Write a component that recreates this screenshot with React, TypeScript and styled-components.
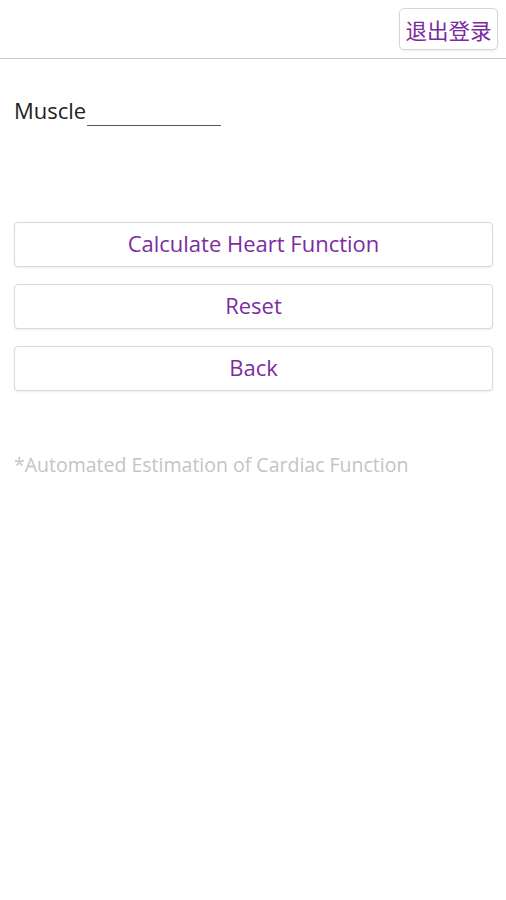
import React from "react";
import styled, { createGlobalStyle } from "styled-components";

const Global = createGlobalStyle`
  html, body { margin: 0; padding: 0; background: #fff; }
  body { font-family: "Open Sans", "Noto Sans CJK SC", sans-serif; }
`;

const Header = styled.header`
  height: 59px;
  border-bottom: 1px solid #c8c8c8;
  display: flex;
  justify-content: flex-end;
  align-items: flex-start;
  padding: 8px 8px 0 0;
  box-sizing: border-box;
`;

const LogoutButton = styled.button`
  width: 99px;
  height: 42px;
  border: 1px solid #d6d6d6;
  border-radius: 5px;
  background: #fff;
  color: #7b2a9e;
  font-family: "Noto Sans CJK SC", sans-serif;
  font-size: 21.5px;
  padding: 0;
  box-shadow: 0 1px 2px rgba(0,0,0,0.08);
`;

const Main = styled.main`
  padding: 34px 13px 0 14px;
  display: flex;
  flex-direction: column;
`;

const FieldRow = styled.div`
  display: flex;
  align-items: flex-end;
  height: 30px;
`;

const Label = styled.span`
  font-size: 22px;
  color: #222;
  line-height: 26px;
`;

const LineInput = styled.input`
  width: 134px;
  border: none;
  border-bottom: 1px solid #555;
  height: 24px;
  padding: 0;
  margin-left: 1px;
  margin-bottom: -3px;
  outline: none;
  background: transparent;
`;

const Buttons = styled.div`
  display: flex;
  flex-direction: column;
  gap: 17px;
  margin-top: 99px;
`;

const ActionButton = styled.button`
  height: 45px;
  width: 100%;
  border: 1px solid #d9d9d9;
  border-radius: 4px;
  background: #fff;
  color: #7d2ca0;
  font-family: "Open Sans", sans-serif;
  font-size: 22px;
  padding: 0 0 3px 0;
  box-shadow: 0 1px 2px rgba(0,0,0,0.08);
`;

const Note = styled.p`
  margin: 60px 0 0 0;
  color: #c4c4c4;
  font-size: 19.5px;
`;

export default function App() {
  return (
    <>
      <Global />
      <Header>
        <LogoutButton>退出登录</LogoutButton>
      </Header>
      <Main>
        <FieldRow>
          <Label>Muscle</Label>
          <LineInput />
        </FieldRow>
        <Buttons>
          <ActionButton>Calculate Heart Function</ActionButton>
          <ActionButton>Reset</ActionButton>
          <ActionButton>Back</ActionButton>
        </Buttons>
        <Note>*Automated Estimation of Cardiac Function</Note>
      </Main>
    </>
  );
}
